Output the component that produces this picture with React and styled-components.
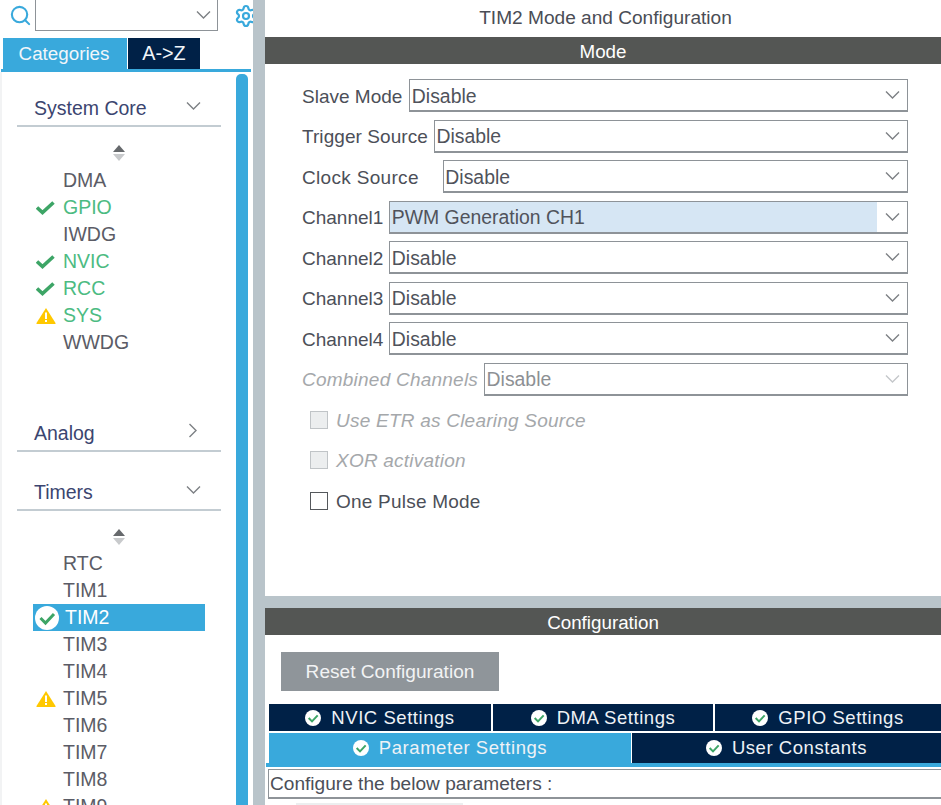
import React from 'react';
import styled, { createGlobalStyle } from 'styled-components';
import { Search, Settings } from 'lucide-react';

const BLUE = '#39a9dc';
const NAVY = '#002147';
const BAR = '#545654';
const SPLIT = '#b9c4ca';

const GlobalStyle = createGlobalStyle`
  html, body { margin: 0; padding: 0; background: #fff; }
  body { font-family: "Liberation Sans", Arial, sans-serif; font-size: 19px; }
  * { box-sizing: border-box; }
`;

const Page = styled.div`
  display: flex;
  width: 941px;
  height: 805px;
  overflow: hidden;
  background: ${SPLIT};
`;

/* left column */
const Sidebar = styled.div`
  width: 253px;
  height: 805px;
  flex-shrink: 0;
  background: #fff;
  overflow: hidden;
`;

const SearchRow = styled.div`
  display: flex;
  align-items: center;
  height: 31px;
  padding-left: 9px;
  color: ${BLUE};
`;

const SearchBox = styled.div`
  display: flex;
  align-items: center;
  justify-content: flex-end;
  width: 183px;
  height: 31px;
  margin-left: 3px;
  padding-right: 6px;
  border: 1px solid #8e9398;
  border-top: 0;
`;

const GearSlot = styled.div`
  display: flex;
  width: 19px;
  height: 24px;
  margin-left: 16px;
  overflow: hidden;
`;

const SideTabs = styled.div`
  display: flex;
  height: 31px;
  margin: 7px 0 0 3px;
  gap: 1px;
`;

const SideTab = styled.div`
  display: flex;
  align-items: center;
  justify-content: center;
  width: ${(p) => p.$w}px;
  padding-right: ${(p) => (p.$active ? 2 : 0)}px;
  background: ${(p) => (p.$active ? BLUE : NAVY)};
  color: #f1f6fa;
  font-size: ${(p) => (p.$active ? 18.8 : 19.8)}px;
`;

const BlueLine = styled.div`
  width: 250px;
  height: 3px;
  margin-left: 1px;
  background: ${BLUE};
`;

const TreeWrap = styled.div`
  display: flex;
  height: 733px;
  border-left: 2px solid #f2f3f4;
`;

const Tree = styled.div`
  width: 204px;
  margin-left: 15px;
  padding-top: 19px;
`;

const Scrollbar = styled.div`
  width: 12px;
  height: 731px;
  margin: 2px 0 0 15px;
  border-radius: 5px 5px 0 0;
  background: ${BLUE};
`;

const SectionHead = styled.div`
  display: flex;
  justify-content: space-between;
  height: 36px;
  margin-top: ${(p) => p.$top || 0}px;
  padding: 6px 20px 0 17px;
  border-bottom: 2px solid #c3ccd2;
  color: #3b4570;
  font-size: 19.5px;
  line-height: 22px;
`;

const ChevronSlot = styled.span`
  display: flex;
  margin-top: ${(p) => p.$top}px;
  margin-right: ${(p) => p.$right || 0}px;
`;

const Stepper = styled.div`
  display: flex;
  justify-content: center;
  height: 21px;
  margin-top: 18px;
`;

const ItemList = styled.div`
  display: flex;
  flex-direction: column;
  margin-top: ${(p) => p.$top}px;
`;

const Item = styled.div`
  display: flex;
  align-items: center;
  width: 172px;
  height: 27px;
  margin-left: 16px;
  padding-left: ${(p) => (p.$selected ? 2 : 3)}px;
  background: ${(p) => (p.$selected ? BLUE : 'transparent')};
  color: ${(p) => (p.$selected ? '#fff' : p.$ok ? '#4cbb82' : '#5b5c66')};
  font-size: 19.5px;
  white-space: nowrap;
`;

const ItemIcon = styled.span`
  display: flex;
  align-items: center;
  justify-content: flex-start;
  width: ${(p) => (p.$selected ? 30 : 27)}px;
  flex-shrink: 0;
`;

/* right column */
const Main = styled.div`
  display: flex;
  flex-direction: column;
  flex: 1;
  height: 805px;
  margin-left: 12px;
  min-width: 0;
`;

const Title = styled.div`
  height: 37px;
  padding-left: 5px;
  background: #fff;
  color: #4a4d55;
  font-size: 19.1px;
  line-height: 35px;
  text-align: center;
`;

const Bar = styled.div`
  height: 27px;
  flex-shrink: 0;
  padding-top: 1px;
  background: ${BAR};
  color: #fff;
  font-size: 18.8px;
  line-height: 27px;
  text-align: center;
`;

const ModePanel = styled.div`
  display: flex;
  flex-direction: column;
  gap: 7.5px;
  height: 532px;
  padding: 15px 33px 0 37px;
  background: #fff;
`;

const FormRow = styled.div`
  display: flex;
  align-items: center;
  height: 33px;
  flex-shrink: 0;
`;

const FieldLabel = styled.span`
  margin-right: ${(p) => p.$gap || 6}px;
  padding-top: 2px;
  color: ${(p) => (p.$off ? '#a5a8ab' : '#4c4f58')};
  font-size: 19px;
  font-style: ${(p) => (p.$off ? 'italic' : 'normal')};
  letter-spacing: ${(p) => p.$ls || 0}px;
  white-space: nowrap;
`;

const Select = styled.div`
  display: flex;
  align-items: center;
  flex: 1;
  height: 33px;
  border: 1px solid #8e9398;
  border-bottom-width: 2px;
  color: ${(p) => (p.$off ? '#8d9094' : '#50535b')};
  font-size: 19.4px;
`;

const SelectValue = styled.span`
  display: flex;
  align-items: center;
  flex: 1;
  height: 100%;
  padding: 2px 0 0 1.5px;
  background: ${(p) => (p.$hi ? '#d6e6f4' : 'transparent')};
`;

const SelectArrow = styled.span`
  display: flex;
  align-items: center;
  justify-content: center;
  width: 30px;
  height: 100%;
`;

const CheckRow = styled(FormRow)`
  padding-left: 8px;
`;

const CheckBox = styled.span`
  width: 18px;
  height: 18px;
  margin-right: 8px;
  border: 1.5px solid ${(p) => (p.$off ? '#c0c4c7' : '#55585c')};
  background: ${(p) => (p.$off ? '#eceeef' : '#fff')};
`;

const Config = styled.div`
  display: flex;
  flex-direction: column;
  flex: 1;
  margin-top: 12px;
  background: #fff;
`;

const ResetButton = styled.div`
  width: 218px;
  height: 39px;
  margin: 17px 0 0 16px;
  background: #8f959a;
  color: #f2f3f4;
  font-size: 19.1px;
  line-height: 39px;
  text-align: center;
`;

const TabGrid = styled.div`
  display: grid;
  grid-template-columns: ${(p) => p.$cols};
  height: ${(p) => p.$h}px;
  margin: ${(p) => p.$top}px 0 0 4px;
  column-gap: ${(p) => p.$gap}px;
`;

const ConfigTab = styled.div`
  display: flex;
  align-items: center;
  justify-content: center;
  gap: 10px;
  background: ${(p) => (p.$active ? BLUE : NAVY)};
  color: #eef2f6;
  font-size: 18.5px;
  letter-spacing: 0.55px;
`;

const ConfigLine = styled.div`
  height: 4px;
  margin-left: 1px;
  background: ${BLUE};
`;

const ParamBox = styled.div`
  height: 30px;
  margin: 2px 0 0 3px;
  padding-left: 1px;
  border: 1px solid #8e9398;
  border-right: 0;
  border-bottom-width: 2px;
  color: #4c4f58;
  font-size: 19.1px;
  line-height: 28px;
`;

const ParamField = styled.div`
  width: 167px;
  height: 2px;
  margin: 4px 0 0 31px;
  background: #eceeef;
`;

const Chevron = ({ dir = 'down', color = '#7d8084', w = 15 }) => (
  <svg width={dir === 'down' ? w : 10} height={dir === 'down' ? 10 : 15} viewBox={dir === 'down' ? '0 0 15 10' : '0 0 10 15'} fill="none">
    <path
      d={dir === 'down' ? 'M1 1.5 L7.5 8 L14 1.5' : 'M1.5 1 L8 7.5 L1.5 14'}
      stroke={color}
      strokeWidth="1.4"
    />
  </svg>
);

const StepperIcon = () => (
  <svg width="12" height="17" viewBox="0 0 12 17">
    <path d="M6 0 L12 7 H0 Z" fill="#66696c" />
    <path d="M0 9 H12 L6 16 Z" fill="#c8cacc" />
  </svg>
);

const CheckMark = () => (
  <svg width="20" height="15" viewBox="0 0 20 15" fill="none">
    <path d="M1 7.5 L6.5 12.5 L17.5 2.5" stroke="#3da566" strokeWidth="3.6" />
  </svg>
);

const WarnIcon = () => (
  <svg width="20" height="17" viewBox="0 0 20 17">
    <path d="M10 1 L19.5 16 Q20 17 19 17 H1 Q0 17 .5 16 Z" fill="#ffc800" />
    <rect x="9" y="5.5" width="2" height="6.5" fill="#fff" />
    <rect x="9" y="13" width="2" height="2" fill="#fff" />
  </svg>
);

const CircleCheck = ({ size = 24 }) => (
  <svg width={size} height={size} viewBox="0 0 24 24" fill="none">
    <circle cx="12" cy="12" r="12" fill="#fff" />
    <path d="M5.5 12 L10.5 17 L19 8" stroke="#3da566" strokeWidth="3" />
  </svg>
);

const TreeItems = ({ items, top }) => (
  <ItemList $top={top}>
    {items.map(([name, state]) => (
      <Item key={name} $ok={state === 'ok' || name === 'SYS'} $selected={state === 'sel'}>
        <ItemIcon $selected={state === 'sel'}>
          {state === 'ok' && <CheckMark />}
          {state === 'warn' && <WarnIcon />}
          {state === 'sel' && <CircleCheck />}
        </ItemIcon>
        {name}
      </Item>
    ))}
  </ItemList>
);

const coreItems = [
  ['DMA'], ['GPIO', 'ok'], ['IWDG'], ['NVIC', 'ok'], ['RCC', 'ok'], ['SYS', 'warn'], ['WWDG'],
];

const timerItems = [
  ['RTC'], ['TIM1'], ['TIM2', 'sel'], ['TIM3'], ['TIM4'], ['TIM5', 'warn'], ['TIM6'], ['TIM7'], ['TIM8'], ['TIM9', 'warn'],
];

const modeRows = [
  { label: 'Slave Mode', value: 'Disable', gap: 7 },
  { label: 'Trigger Source', value: 'Disable', ls: 0.07 },
  { label: 'Clock Source', value: 'Disable', gap: 24, ls: 0.32 },
  { label: 'Channel1', value: 'PWM Generation CH1', hi: true },
  { label: 'Channel2', value: 'Disable' },
  { label: 'Channel3', value: 'Disable' },
  { label: 'Channel4', value: 'Disable' },
  { label: 'Combined Channels', value: 'Disable', off: true, ls: 0.23 },
];

const App = () => (
  <Page>
    <GlobalStyle />
    <Sidebar>
      <SearchRow>
        <Search size={23} strokeWidth={2.2} />
        <SearchBox>
          <Chevron />
        </SearchBox>
        <GearSlot>
          <Settings size={24} strokeWidth={2.2} style={{ flexShrink: 0 }} />
        </GearSlot>
      </SearchRow>
      <SideTabs>
        <SideTab $w={124} $active>Categories</SideTab>
        <SideTab $w={72}>A-&gt;Z</SideTab>
      </SideTabs>
      <BlueLine />
      <TreeWrap>
        <Tree>
          <SectionHead>
            System Core
            <ChevronSlot $top={4}><Chevron /></ChevronSlot>
          </SectionHead>
          <Stepper><StepperIcon /></Stepper>
          <TreeItems items={coreItems} top={1} />
          <SectionHead $top={60}>
            Analog
            <ChevronSlot $top={1} $right={3}><Chevron dir="right" /></ChevronSlot>
          </SectionHead>
          <SectionHead $top={23}>
            Timers
            <ChevronSlot $top={4}><Chevron /></ChevronSlot>
          </SectionHead>
          <Stepper><StepperIcon /></Stepper>
          <TreeItems items={timerItems} top={0} />
        </Tree>
        <Scrollbar />
      </TreeWrap>
    </Sidebar>

    <Main>
      <Title>TIM2 Mode and Configuration</Title>
      <Bar>Mode</Bar>
      <ModePanel>
        {modeRows.map((row) => (
          <FormRow key={row.label}>
            <FieldLabel $gap={row.gap} $off={row.off} $ls={row.ls}>{row.label}</FieldLabel>
            <Select $off={row.off}>
              <SelectValue $hi={row.hi}>{row.value}</SelectValue>
              <SelectArrow><Chevron color={row.off ? '#c4c7ca' : '#7d8084'} /></SelectArrow>
            </Select>
          </FormRow>
        ))}
        <CheckRow>
          <CheckBox $off />
          <FieldLabel $off $ls={0.23}>Use ETR as Clearing Source</FieldLabel>
        </CheckRow>
        <CheckRow>
          <CheckBox $off />
          <FieldLabel $off $ls={0.22}>XOR activation</FieldLabel>
        </CheckRow>
        <CheckRow>
          <CheckBox />
          <FieldLabel $ls={0.22}>One Pulse Mode</FieldLabel>
        </CheckRow>
      </ModePanel>
      <Config>
        <Bar>Configuration</Bar>
        <ResetButton>Reset Configuration</ResetButton>
        <TabGrid $cols="222px 220px 1fr" $h={27} $top={13} $gap={2}>
          <ConfigTab><CircleCheck size={16} />NVIC Settings</ConfigTab>
          <ConfigTab><CircleCheck size={16} />DMA Settings</ConfigTab>
          <ConfigTab><CircleCheck size={16} />GPIO Settings</ConfigTab>
        </TabGrid>
        <TabGrid $cols="362px 1fr" $h={30} $top={2} $gap={1}>
          <ConfigTab $active><CircleCheck size={16} />Parameter Settings</ConfigTab>
          <ConfigTab><CircleCheck size={16} />User Constants</ConfigTab>
        </TabGrid>
        <ConfigLine />
        <ParamBox>Configure the below parameters :</ParamBox>
        <ParamField />
      </Config>
    </Main>
  </Page>
);

export default App;
